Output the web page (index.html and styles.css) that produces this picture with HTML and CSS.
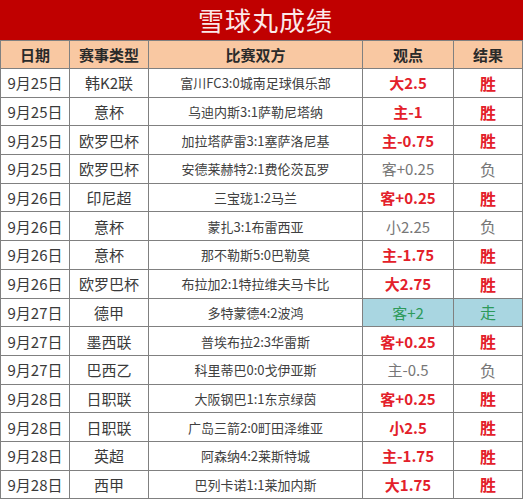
FILE: index.html
```html
<!DOCTYPE html>
<html lang="zh-CN">
<head>
<meta charset="utf-8">
<title>雪球丸成绩</title>
<link rel="stylesheet" href="styles.css">
</head>
<body>
<div class="sheet">
  <div class="title">雪球丸成绩</div>
  <table class="grid">
    <colgroup>
      <col class="c-date"><col class="c-type"><col class="c-match"><col class="c-tip"><col class="c-res">
    </colgroup>
    <thead>
      <tr><th>日期</th><th>赛事类型</th><th>比赛双方</th><th>观点</th><th>结果</th></tr>
    </thead>
    <tbody>
      <tr><td>9月25日</td><td>韩K2联</td><td class="match">富川FC3:0城南足球俱乐部</td><td class="win">大2.5</td><td class="win-r">胜</td></tr>
      <tr><td>9月25日</td><td>意杯</td><td class="match">乌迪内斯3:1萨勒尼塔纳</td><td class="win">主-1</td><td class="win-r">胜</td></tr>
      <tr><td>9月25日</td><td>欧罗巴杯</td><td class="match">加拉塔萨雷3:1塞萨洛尼基</td><td class="win">主-0.75</td><td class="win-r">胜</td></tr>
      <tr><td>9月25日</td><td>欧罗巴杯</td><td class="match">安德莱赫特2:1费伦茨瓦罗</td><td class="lose">客+0.25</td><td class="lose-r">负</td></tr>
      <tr><td>9月26日</td><td>印尼超</td><td class="match">三宝珑1:2马兰</td><td class="win">客+0.25</td><td class="win-r">胜</td></tr>
      <tr><td>9月26日</td><td>意杯</td><td class="match">蒙扎3:1布雷西亚</td><td class="lose">小2.25</td><td class="lose-r">负</td></tr>
      <tr><td>9月26日</td><td>意杯</td><td class="match">那不勒斯5:0巴勒莫</td><td class="win">主-1.75</td><td class="win-r">胜</td></tr>
      <tr><td>9月26日</td><td>欧罗巴杯</td><td class="match">布拉加2:1特拉维夫马卡比</td><td class="win">大2.75</td><td class="win-r">胜</td></tr>
      <tr><td>9月27日</td><td>德甲</td><td class="match">多特蒙德4:2波鸿</td><td class="push">客+2</td><td class="push-r">走</td></tr>
      <tr><td>9月27日</td><td>墨西联</td><td class="match">普埃布拉2:3华雷斯</td><td class="win">客+0.25</td><td class="win-r">胜</td></tr>
      <tr><td>9月27日</td><td>巴西乙</td><td class="match">科里蒂巴0:0戈伊亚斯</td><td class="lose">主-0.5</td><td class="lose-r">负</td></tr>
      <tr><td>9月28日</td><td>日职联</td><td class="match">大阪钢巴1:1东京绿茵</td><td class="win">客+0.25</td><td class="win-r">胜</td></tr>
      <tr><td>9月28日</td><td>日职联</td><td class="match">广岛三箭2:0町田泽维亚</td><td class="win">小2.5</td><td class="win-r">胜</td></tr>
      <tr><td>9月28日</td><td>英超</td><td class="match">阿森纳4:2莱斯特城</td><td class="win">主-1.75</td><td class="win-r">胜</td></tr>
      <tr><td>9月28日</td><td>西甲</td><td class="match">巴列卡诺1:1莱加内斯</td><td class="win">大1.75</td><td class="win-r">胜</td></tr>
    </tbody>
  </table>
</div>
</body>
</html>
```

FILE: styles.css
```css
html, body {
  margin: 0;
  padding: 0;
  background: #ffffff;
}

body {
  font-family: "Noto Sans CJK SC", "Noto Sans", sans-serif;
  color: #333333;
}

.sheet {
  width: 523px;
  overflow: hidden;
}

.title {
  height: 40px;
  background: #c00000;
  color: #fbe9e9;
  font-size: 26px;
  line-height: 40px;
  text-align: center;
  padding-left: 8px;
  letter-spacing: 1px;
}

.grid {
  width: 522px;
  border-collapse: collapse;
  table-layout: fixed;
}

.c-date { width: 69px; }
.c-type { width: 79px; }
.c-match { width: 214px; }
.c-tip { width: 91px; }
.c-res { width: 69px; }

.grid th,
.grid td {
  border: 1px solid #808080;
  text-align: center;
  padding: 0;
  white-space: nowrap;
  overflow: hidden;
}

.grid th {
  height: 27px;
  background: #f9c8a2;
  color: #2a2a2a;
  font-size: 15px;
  font-weight: 700;
}

.grid td {
  height: 27.7px;
  font-size: 15px;
  color: #3a3a3a;
}

.grid td.match {
  font-size: 13px;
  color: #404040;
}

.grid td.win {
  color: #e3202a;
  font-weight: 700;
  font-size: 15px;
}

.grid td.win-r {
  color: #e3202a;
  font-weight: 700;
  font-size: 16px;
}

.grid td.lose {
  color: #777777;
  font-size: 15px;
}

.grid td.lose-r {
  color: #777777;
  font-size: 16px;
}

.grid td.push,
.grid td.push-r {
  background: #a9d6e1;
  color: #2d9a5a;
}

.grid td.push-r {
  font-size: 16px;
}
```
